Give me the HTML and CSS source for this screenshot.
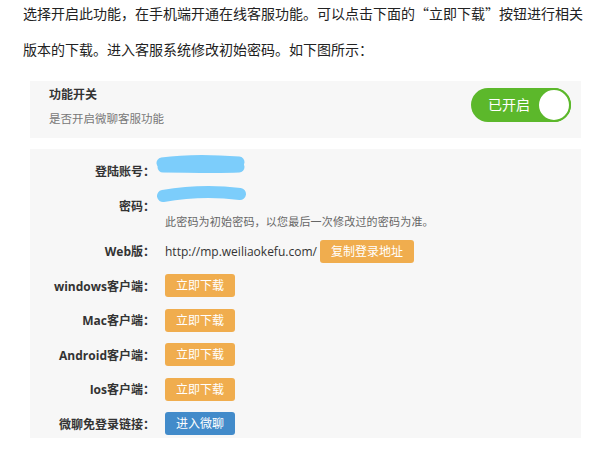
FILE: index.html
```html
<!DOCTYPE html>
<html lang="zh-CN">
<head>
<meta charset="utf-8">
<link rel="stylesheet" href="styles.css">
</head>
<body>
<div class="page">
  <p class="intro">选择开启此功能，在手机端开通在线客服功能。可以点击下面的“立即下载”按钮进行相关版本的下载。进入客服系统修改初始密码。如下图所示：</p>

  <section class="panel switch-panel">
    <div class="switch-text">
      <div class="switch-title">功能开关</div>
      <div class="switch-desc">是否开启微聊客服功能</div>
    </div>
    <div class="toggle">
      <span class="toggle-label">已开启</span>
      <span class="toggle-knob"></span>
    </div>
  </section>

  <section class="panel form-panel">
    <div class="row">
      <div class="label">登陆账号：</div>
      <div class="value masked">
        <svg class="scribble s1" width="92" height="22" viewBox="0 0 92 22">
          <path d="M7 9 C28 6 58 6 84 8 M8 13 C30 13 60 14 84 13" stroke="#7ccdfb" stroke-width="11" stroke-linecap="round" fill="none"/>
        </svg>
      </div>
    </div>
    <div class="row-group">
      <div class="row">
        <div class="label">密码：</div>
        <div class="value masked">
          <svg class="scribble s2" width="92" height="18" viewBox="0 0 92 18">
            <path d="M7 10 C30 6 60 5 84 8" stroke="#7ccdfb" stroke-width="12" stroke-linecap="round" fill="none"/>
          </svg>
        </div>
      </div>
      <div class="note">此密码为初始密码，以您最后一次修改过的密码为准。</div>
    </div>
    <div class="row">
      <div class="label">Web版：</div>
      <div class="value"><span class="url">http://mp.weiliaokefu.com/</span><button class="btn btn-orange btn-wide">复制登录地址</button></div>
    </div>
    <div class="row">
      <div class="label">windows客户端：</div>
      <div class="value"><button class="btn btn-orange">立即下载</button></div>
    </div>
    <div class="row">
      <div class="label">Mac客户端：</div>
      <div class="value"><button class="btn btn-orange">立即下载</button></div>
    </div>
    <div class="row">
      <div class="label">Android客户端：</div>
      <div class="value"><button class="btn btn-orange">立即下载</button></div>
    </div>
    <div class="row">
      <div class="label">Ios客户端：</div>
      <div class="value"><button class="btn btn-orange">立即下载</button></div>
    </div>
    <div class="row">
      <div class="label">微聊免登录链接：</div>
      <div class="value"><button class="btn btn-blue">进入微聊</button></div>
    </div>
  </section>
</div>
</body>
</html>
```

FILE: styles.css
```css
* { box-sizing: border-box; }
html, body { margin: 0; padding: 0; background: #fff; }
body {
  font-family: "Open Sans", "Noto Sans CJK SC", sans-serif;
  color: #333;
}
.page { width: 608px; }

.intro {
  margin: -5px 0 0 23px;
  width: 562px;
  font-family: "Noto Sans CJK SC", sans-serif;
  font-size: 14px;
  line-height: 36px;
  color: #222;
}

.panel {
  margin-left: 30px;
  width: 551px;
  background: #f7f7f7;
}

.switch-panel {
  margin-top: 14px;
  height: 57px;
  display: flex;
  justify-content: space-between;
  align-items: flex-start;
  padding: 6px 10px 0 19px;
}
.switch-title {
  font-size: 12px;
  font-weight: bold;
  line-height: 16px;
  color: #333;
}
.switch-desc {
  margin-top: 8px;
  font-size: 11.5px;
  line-height: 16px;
  color: #777;
}
.toggle {
  margin-top: 1px;
  width: 100px;
  height: 34px;
  border-radius: 17px;
  background: #5cb82b;
  display: flex;
  align-items: center;
  justify-content: space-between;
  padding: 0 0 0 17px;
}
.toggle-label {
  color: #fff;
  font-size: 14px;
  line-height: 34px;
}
.toggle-knob {
  width: 34px;
  height: 34px;
  border-radius: 50%;
  background: #fff;
  border: 2px solid #5cb82b;
}

.form-panel {
  margin-top: 11px;
  padding: 10.5px 0 2.5px 0;
  display: flex;
  flex-direction: column;
  gap: 11.5px;
}
.row {
  display: grid;
  grid-template-columns: 125px 1fr;
  column-gap: 10px;
  align-items: center;
  height: 23px;
}
.label {
  text-align: right;
  font-size: 12px;
  font-weight: bold;
  color: #333;
  white-space: nowrap;
}
.value {
  display: flex;
  align-items: center;
  height: 23px;
  font-size: 12px;
}
.masked { position: relative; }
.scribble { position: absolute; }
.s1 { left: -10px; top: -6px; }
.s2 { left: -9px; top: -8px; }

.row-group { display: flex; flex-direction: column; }
.note {
  margin: -1px 0 0 135px;
  font-size: 11px;
  line-height: 12px;
  letter-spacing: 0.2px;
  color: #666;
}
.url {
  color: #333;
  font-size: 12px;
  margin-right: 3px;
}
.btn {
  width: 70px;
  height: 23px;
  border: none;
  border-radius: 3px;
  color: #fff;
  font-family: "Open Sans", "Noto Sans CJK SC", sans-serif;
  font-size: 12px;
  line-height: 23px;
  padding: 0;
}
.btn-wide { width: 94px; }
.btn-orange { background: #f0ad4e; }
.btn-blue { background: #428bca; }
```
